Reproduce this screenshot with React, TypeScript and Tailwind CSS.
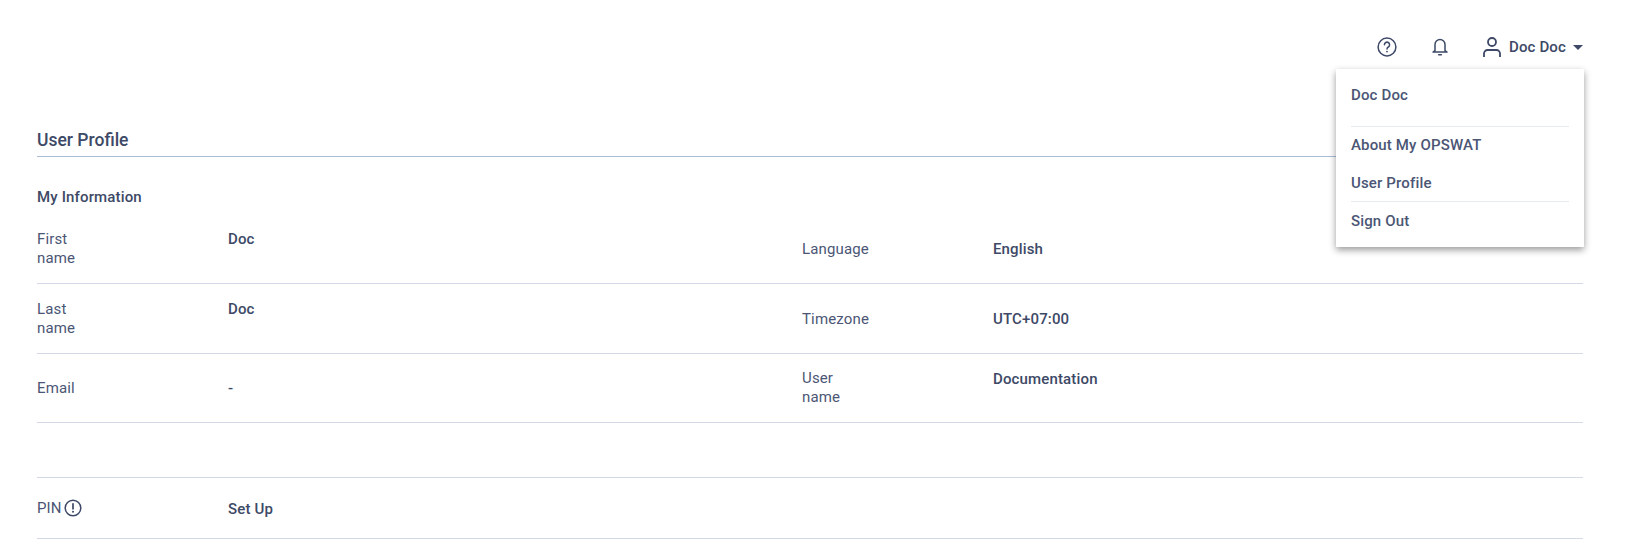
import { ReactNode } from "react";

const Row = ({ children, className = "" }: { children: ReactNode; className?: string }) => (
  <div className={`grid grid-cols-[765px_1fr] border-b border-[#d3d9e6] ${className}`}>{children}</div>
);

const Cell = ({
  label,
  value,
  labelClass = "",
  valueClass = "pt-[2px]",
}: {
  label: ReactNode;
  value: string;
  labelClass?: string;
  valueClass?: string;
}) => (
  <div className="flex items-center">
    <div className={`w-[191px] pr-[130px] leading-[19px] text-[#4b5675] ${labelClass}`}>{label}</div>
    <div className={`font-medium text-[#3d4966] ${valueClass}`}>{value}</div>
  </div>
);

const HelpIcon = () => (
  <svg width="20" height="20" viewBox="0 0 20 20" fill="none" stroke="#3d4966" strokeWidth="1.5">
    <circle cx="10" cy="10" r="8.9" />
    <path d="M7.4 7.7a2.6 2.6 0 1 1 3.9 2.3c-.9.5-1.3 1-1.3 2" strokeLinecap="round" />
    <circle cx="10" cy="14.6" r=".9" fill="#3d4966" stroke="none" />
  </svg>
);

const BellIcon = () => (
  <svg width="16" height="18" viewBox="0 0 16 18" fill="none" stroke="#3d4966" strokeWidth="1.5" strokeLinejoin="round">
    <path d="M3 12.6V6.6a5 5 0 0 1 10 0v6l2 1.4H1z" />
    <path d="M6.6 16.8h2.8" strokeLinecap="round" />
  </svg>
);

const UserIcon = () => (
  <svg width="18" height="20" viewBox="0 0 18 20" fill="none" stroke="#3d4966" strokeWidth="1.8">
    <circle cx="9" cy="5" r="4" />
    <path d="M1 20v-3.5a3.5 3.5 0 0 1 3.5-3.5h9a3.5 3.5 0 0 1 3.5 3.5V20" />
  </svg>
);

const AlertIcon = () => (
  <svg width="18" height="18" viewBox="0 0 18 18" fill="none" stroke="#3d4966" strokeWidth="1.5">
    <circle cx="9" cy="9" r="7.8" />
    <path d="M9 4.8v5" strokeLinecap="round" strokeWidth="1.7" />
    <circle cx="9" cy="12.8" r="1" fill="#3d4966" stroke="none" />
  </svg>
);

const App = () => {
  return (
    <div className="relative h-[542px] w-[1627px] overflow-hidden bg-white font-['Roboto',sans-serif] text-[15px] tracking-[0.15px] text-[#3d4966]">
      <header className="flex h-[94px] items-start justify-end pr-[44px] pt-[36px]">
        <div className="flex items-center">
          <HelpIcon />
          <div className="ml-[35px]"><BellIcon /></div>
          <div className="ml-[35px]"><UserIcon /></div>
          <span className="ml-[8px] font-medium">Doc Doc</span>
          <span className="ml-[7px] h-0 w-0 border-x-[5px] border-t-[5px] border-x-transparent border-t-[#3d4966]" />
        </div>
      </header>

      <main className="pl-[37px] pr-[44px]">
        <h1 className="mt-[36px] h-[26px] text-[17.5px] font-medium leading-5 tracking-normal text-[#3d4966]">User Profile</h1>
        <div className="h-px bg-[#aabbd6]" />
        <h2 className="mt-[30px] font-medium leading-5">My Information</h2>

        <div className="mt-[10px]">
          <Row className="h-[67px] pb-[3px]">
            <Cell label="First name" value="Doc" valueClass="self-start pt-[11px]" />
            <Cell label="Language" value="English" labelClass="pt-[2px]" />
          </Row>
          <Row className="h-[70px]">
            <Cell label="Last name" value="Doc" valueClass="self-start pt-[14px]" />
            <Cell label="Timezone" value="UTC+07:00" labelClass="pt-[2px]" />
          </Row>
          <Row className="h-[69px]">
            <Cell label="Email" value="-" valueClass="" />
            <Cell label="User name" value="Documentation" valueClass="self-start pt-[14px]" />
          </Row>
          <div className="mt-[54px] flex h-[62px] items-center border-y border-[#d3d9e6]">
            <div className="flex w-[191px] items-center gap-[2px] text-[#4b5675]">PIN <AlertIcon /></div>
            <div className="pt-[2px] font-medium">Set Up</div>
          </div>
        </div>
      </main>

      <div className="absolute left-[1336px] top-[69px] w-[248px] bg-white px-[15px] pb-[7px] font-medium text-[#4b5675] shadow-[0_3px_7px_rgba(0,0,0,0.4)]">
        <div className="h-[57px] pt-[16px] leading-5">Doc Doc</div>
        <div className="flex h-[38px] items-center border-t border-[#e8ebf2]">About My OPSWAT</div>
        <div className="flex h-[37px] items-center pt-[1px]">User Profile</div>
        <div className="flex h-[39px] items-center border-t border-[#e8ebf2]">Sign Out</div>
      </div>
    </div>
  );
};

export default App;
